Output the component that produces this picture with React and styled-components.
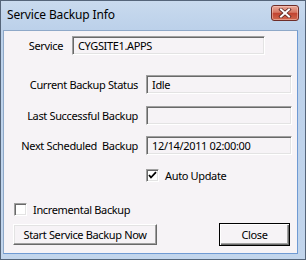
import React from "react";
import styled, { createGlobalStyle } from "styled-components";

const GlobalStyle = createGlobalStyle`
  html, body {
    margin: 0;
    padding: 0;
    background: #ffffff;
  }
  body {
    font-family: "Noto Sans", "Liberation Sans", sans-serif;
    color: #000000;
  }
`;

const Window = styled.div`
  width: 306px;
  height: 260px;
  box-sizing: border-box;
  display: flex;
  flex-direction: column;
  border: 1px solid #55657a;
  background: linear-gradient(#c9daee, #bcd1ea 28px, #c2d5ec);
`;

const TitleBar = styled.div`
  height: 29px;
  flex: none;
  display: flex;
  align-items: flex-start;
  justify-content: space-between;
  padding: 0 6px 0 6px;
`;

const Title = styled.span`
  font-size: 12px;
  letter-spacing: -0.15px;
  line-height: 27px;
`;

const CloseGlyph = styled.button`
  width: 28px;
  height: 16px;
  margin-top: 4px;
  padding: 0;
  display: flex;
  align-items: center;
  justify-content: center;
  border: 1px solid #6e2d28;
  border-radius: 3px;
  background: linear-gradient(#e9a898, #d77966 45%, #c24431 52%, #d0694f);
  box-shadow: inset 0 0 0 1px rgba(255, 220, 210, 0.45);
`;

const Client = styled.div`
  flex: 1;
  margin: 0 7px 5px 2px;
  border: 1px solid #8ea8c8;
  border-right-color: #6f9ad3;
  border-bottom-color: #6f9ad3;
  background: #f6f3f6;
  display: flex;
  flex-direction: column;
  padding-top: 5px;
  font-size: 11px;
  letter-spacing: -0.35px;
`;

const FieldRow = styled.div`
  display: flex;
  align-items: center;
  gap: ${(p) => p.$gap}px;
  margin-top: ${(p) => p.$top || 0}px;
`;

const Label = styled.span`
  width: ${(p) => p.$width}px;
  text-align: right;
  white-space: pre;
  flex: none;
`;

const ReadOnlyBox = styled.div`
  width: ${(p) => p.$width}px;
  height: 19px;
  box-sizing: border-box;
  flex: none;
  display: flex;
  align-items: center;
  padding-left: 5px;
  border: 1px solid;
  border-color: #a0a0a0 #ffffff #ffffff #a0a0a0;
  box-shadow: inset 1px 1px 0 #696969, inset -1px -1px 0 #e3e3e3;
  background: #f6f3f6;
`;

const CheckRow = styled.label`
  display: flex;
  align-items: center;
  gap: 6px;
  height: 13px;
  line-height: 13px;
  margin-top: ${(p) => p.$top}px;
  padding-left: ${(p) => p.$indent}px;
`;

const CheckBox = styled.span`
  width: 13px;
  height: 13px;
  box-sizing: border-box;
  flex: none;
  display: flex;
  align-items: center;
  justify-content: center;
  border: 1px solid;
  border-color: #a0a0a0 #ffffff #ffffff #a0a0a0;
  box-shadow: inset 1px 1px 0 #696969, inset -1px -1px 0 #e3e3e3;
  background: #ffffff;
`;

const ButtonRow = styled.div`
  display: flex;
  justify-content: space-between;
  align-items: center;
  margin-top: 7px;
  padding: 0 7px 0 9px;
`;

const PushButton = styled.button`
  width: ${(p) => p.$width}px;
  height: ${(p) => (p.$default ? 23 : 21)}px;
  box-sizing: border-box;
  padding: 0;
  font-family: inherit;
  font-size: 11px;
  letter-spacing: -0.35px;
  color: #000000;
  background: #f6f3f6;
  border: 1px solid;
  border-color: ${(p) =>
    p.$default ? "#000000" : "#ffffff #696969 #696969 #ffffff"};
  box-shadow: ${(p) =>
    p.$default
      ? "inset 1px 1px 0 #ffffff, inset -1px -1px 0 #696969, inset -2px -2px 0 #a0a0a0"
      : "inset -1px -1px 0 #a0a0a0, inset 1px 1px 0 #e3e3e3"};
`;

const CheckMark = () => (
  <svg width="9" height="9" viewBox="0 0 9 9">
    <path d="M1 4 L3 6.5 L8 1.2" fill="none" stroke="#000" strokeWidth="1.8" />
  </svg>
);

const CloseX = () => (
  <svg width="14" height="10" viewBox="0 0 14 10">
    <path d="M3 1.5 L11 8.5 M11 1.5 L3 8.5" stroke="#5a2520" strokeWidth="3.6" strokeLinecap="square" />
    <path d="M3 1.5 L11 8.5 M11 1.5 L3 8.5" stroke="#ffffff" strokeWidth="2" strokeLinecap="square" />
  </svg>
);

export default function App() {
  return (
    <>
      <GlobalStyle />
      <Window>
        <TitleBar>
          <Title>Service Backup Info</Title>
          <CloseGlyph aria-label="Close">
            <CloseX />
          </CloseGlyph>
        </TitleBar>
        <Client>
          <FieldRow $gap={9}>
            <Label $width={59}>Service</Label>
            <ReadOnlyBox $width={193}>CYGSITE1.APPS</ReadOnlyBox>
          </FieldRow>
          <FieldRow $gap={8} $top={20}>
            <Label $width={134}>Current Backup Status</Label>
            <ReadOnlyBox $width={146}>Idle</ReadOnlyBox>
          </FieldRow>
          <FieldRow $gap={8} $top={12}>
            <Label $width={134}>Last Successful Backup</Label>
            <ReadOnlyBox $width={146} />
          </FieldRow>
          <FieldRow $gap={8} $top={11}>
            <Label $width={134}>{"Next Scheduled  Backup"}</Label>
            <ReadOnlyBox $width={146}>12/14/2011 02:00:00</ReadOnlyBox>
          </FieldRow>
          <CheckRow $top={14} $indent={142}>
            <CheckBox>
              <CheckMark />
            </CheckBox>
            Auto Update
          </CheckRow>
          <CheckRow $top={21} $indent={10}>
            <CheckBox />
            Incremental Backup
          </CheckRow>
          <ButtonRow>
            <PushButton $width={144}>Start Service Backup Now</PushButton>
            <PushButton $width={71} $default>
              Close
            </PushButton>
          </ButtonRow>
        </Client>
      </Window>
    </>
  );
}
